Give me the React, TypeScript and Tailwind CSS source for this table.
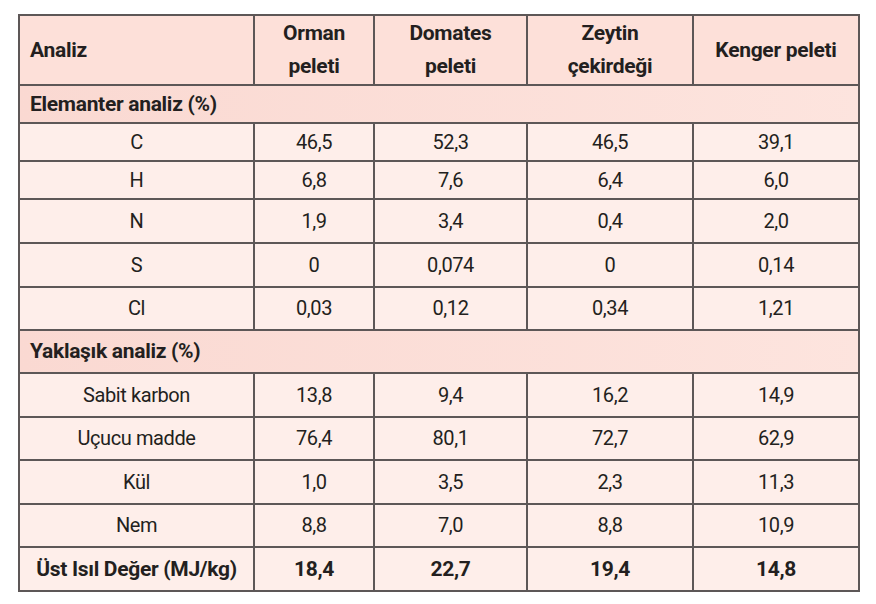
import React from 'react';

type Row = { label: string; values: string[]; h: string };

const elemanter: Row[] = [
  { label: 'C', values: ['46,5', '52,3', '46,5', '39,1'], h: 'h-[38px]' },
  { label: 'H', values: ['6,8', '7,6', '6,4', '6,0'], h: 'h-[38px]' },
  { label: 'N', values: ['1,9', '3,4', '0,4', '2,0'], h: 'h-[44px]' },
  { label: 'S', values: ['0', '0,074', '0', '0,14'], h: 'h-[44px]' },
  { label: 'Cl', values: ['0,03', '0,12', '0,34', '1,21'], h: 'h-[43px]' },
];

const yaklasik: Row[] = [
  { label: 'Sabit karbon', values: ['13,8', '9,4', '16,2', '14,9'], h: 'h-[44px]' },
  { label: 'Uçucu madde', values: ['76,4', '80,1', '72,7', '62,9'], h: 'h-[43px]' },
  { label: 'Kül', values: ['1,0', '3,5', '2,3', '11,3'], h: 'h-[44px]' },
  { label: 'Nem', values: ['8,8', '7,0', '8,8', '10,9'], h: 'h-[43px]' },
];

const cell = 'border-2 border-[#5d5757] text-center align-middle p-0';
const boldText = 'font-bold text-[21px] tracking-[-0.3px]';

const DataRow = ({ r }: { r: Row }) => (
  <tr className={`bg-[#feeeea] ${r.h}`}>
    <td className={cell}>{r.label}</td>
    {r.values.map((v, i) => <td key={i} className={cell}>{v}</td>)}
  </tr>
);

const SectionRow = ({ title, h }: { title: string; h: string }) => (
  <tr className={`bg-gradient-to-r from-[#fad9d2] to-[#fde4de] ${h}`}>
    <td colSpan={5} className={`border-2 border-[#5d5757] text-left align-middle pl-[10px] ${boldText}`}>{title}</td>
  </tr>
);

export default function App() {
  return (
    <div className="w-[876px] h-[604px] bg-white pt-[14px] pl-[18px]">
      <table className="border-collapse text-[20px] tracking-[-0.4px] text-[#231f20] leading-[33px] font-['Roboto',sans-serif]">
        <colgroup>
          <col className="w-[235px]" />
          <col className="w-[120px]" />
          <col className="w-[153px]" />
          <col className="w-[166px]" />
          <col className="w-[166px]" />
        </colgroup>
        <tbody>
          <tr className={`bg-[#fde0d9] h-[70px] ${boldText}`}>
            <td className="border-2 border-[#5d5757] text-left align-middle pl-[10px]">Analiz</td>
            <td className={cell}>Orman<br />peleti</td>
            <td className={cell}>Domates<br />peleti</td>
            <td className={cell}>Zeytin<br />çekirdeği</td>
            <td className={cell}>Kenger peleti</td>
          </tr>
          <SectionRow title="Elemanter analiz (%)" h="h-[38px]" />
          {elemanter.map(r => <DataRow key={r.label} r={r} />)}
          <SectionRow title="Yaklaşık analiz (%)" h="h-[43px]" />
          {yaklasik.map(r => <DataRow key={r.label} r={r} />)}
          <tr className={`bg-[#feeeea] h-[44px] ${boldText}`}>
            <td className={cell}>Üst Isıl Değer (MJ/kg)</td>
            <td className={cell}>18,4</td>
            <td className={cell}>22,7</td>
            <td className={cell}>19,4</td>
            <td className={cell}>14,8</td>
          </tr>
        </tbody>
      </table>
    </div>
  );
}
